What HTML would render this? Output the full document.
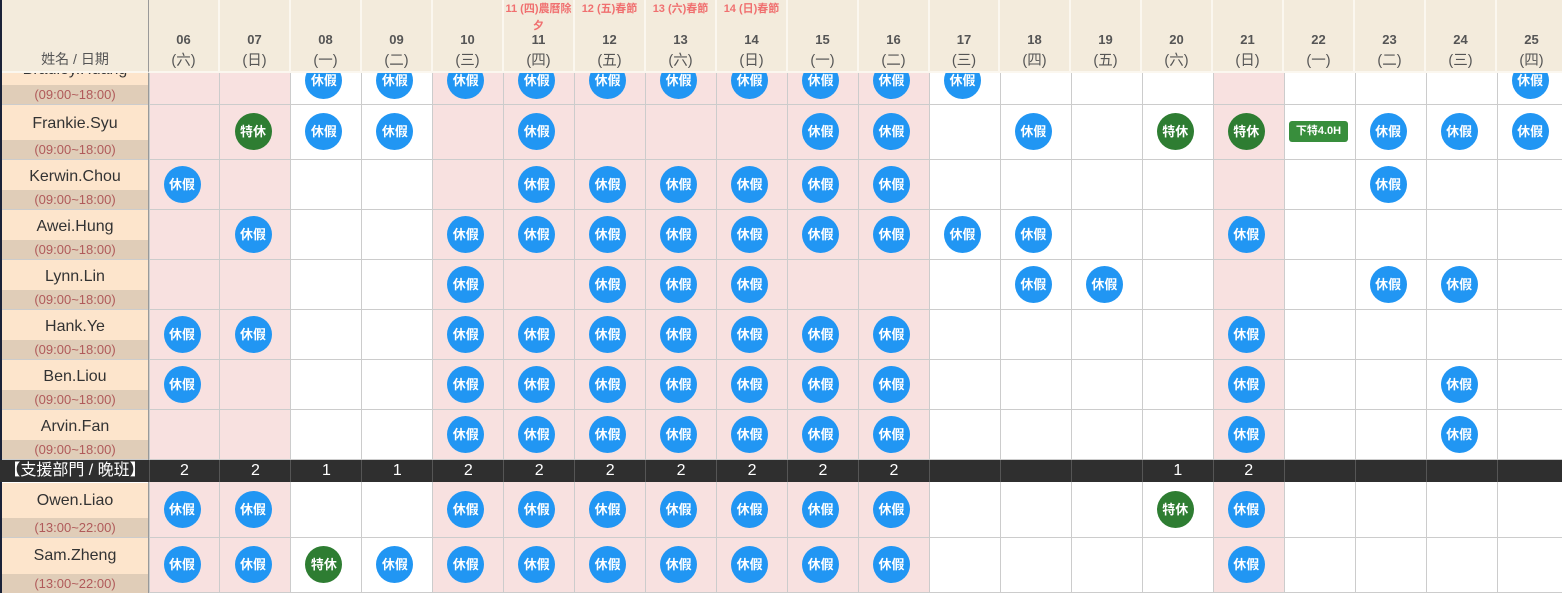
<!DOCTYPE html>
<html><head><meta charset="utf-8"><style>
*{margin:0;padding:0;box-sizing:border-box}
body{width:1562px;height:593px;overflow:hidden;background:#fff;position:relative;font-family:"Liberation Sans","Noto Sans CJK TC",sans-serif}
.a{position:absolute}
.col{position:absolute;top:0;height:593px;width:71px;border-left:1px solid #ccc}
.pk{background:#f8e1e0}
.hl{position:absolute;left:0;width:1562px;height:1px;background:#ccc}
.hdr{position:absolute;top:0;height:73px;background:#f3ebdc;border-right:2px solid #fbf7ef;border-bottom:2px solid #fbf7ef;text-align:center;color:#555}
.hdr .n{position:absolute;left:0;right:0;top:32px;font-weight:bold;font-size:13px}
.hdr .w{position:absolute;left:0;right:0;top:49px;font-size:14.5px}
.hdr .h{position:absolute;left:0;right:0;top:1px;font-size:11px;color:#f07070;font-weight:bold;line-height:17px}
.nm{position:absolute;left:2px;width:146px;background:#fde5cc;text-align:center;color:#333;font-size:16px}
.nm .t{position:absolute;left:0;right:0;bottom:0;height:19px;background:#e0cdb8;color:#b05a5a;font-size:13px;line-height:19px}
.b,.g{position:absolute;width:37px;height:37px;border-radius:50%;color:#fff;font-size:13px;font-weight:bold;text-align:center;line-height:37px;font-style:normal}
.b{background:#2196f3}.g{background:#2e7d32}
.c0{left:163.5px}.c1{left:234.5px}.c2{left:305.4px}.c3{left:376.4px}.c4{left:447.3px}.c5{left:518.3px}.c6{left:589.2px}.c7{left:660.2px}.c8{left:731.1px}.c9{left:802.1px}.c10{left:873px}.c11{left:944px}.c12{left:1014.9px}.c13{left:1085.9px}.c14{left:1156.8px}.c15{left:1227.8px}.c16{left:1298.7px}.c17{left:1369.7px}.c18{left:1440.6px}.c19{left:1511.6px}
.r0{top:62px}.r1{top:112.5px}.r2{top:165.5px}.r3{top:215.5px}.r4{top:265.5px}.r5{top:316px}.r6{top:366px}.r7{top:416px}.r8{top:490.5px}.r9{top:545.5px}
.bar{position:absolute;left:0;top:460px;width:1562px;height:22px;background:#2f2f2f;color:#fff;font-size:16px;line-height:22px}
.bar span{position:absolute;width:71px;text-align:center;top:0;height:22px;border-left:1px solid #555}
</style></head><body>
<div class="col pk" style="left:148.5px"></div><div class="col pk" style="left:219.4px"></div><div class="col" style="left:290.4px"></div><div class="col" style="left:361.3px"></div><div class="col pk" style="left:432.3px"></div><div class="col pk" style="left:503.2px"></div><div class="col pk" style="left:574.2px"></div><div class="col pk" style="left:645.1px"></div><div class="col pk" style="left:716.1px"></div><div class="col pk" style="left:787px"></div><div class="col pk" style="left:858px"></div><div class="col" style="left:928.9px"></div><div class="col" style="left:999.9px"></div><div class="col" style="left:1070.8px"></div><div class="col" style="left:1141.8px"></div><div class="col pk" style="left:1212.7px"></div><div class="col" style="left:1283.7px"></div><div class="col" style="left:1354.6px"></div><div class="col" style="left:1425.6px"></div><div class="col" style="left:1496.5px"></div>
<div class="hl" style="top:104px"></div><div class="hl" style="top:159px"></div><div class="hl" style="top:209px"></div><div class="hl" style="top:259px"></div><div class="hl" style="top:309px"></div><div class="hl" style="top:359px"></div><div class="hl" style="top:409px"></div><div class="hl" style="top:459px"></div><div class="hl" style="top:537px"></div><div class="hl" style="top:592px"></div>
<div class="a" style="left:0;top:0;width:2px;height:593px;background:#1a2238"></div>
<div class="a" style="left:148px;top:0;width:1px;height:593px;background:#999"></div>
<div class="nm" style="top:50px;height:54px"><div style="position:absolute;left:0;right:0;top:11px">Bradley.Huang</div><div class="t">(09:00~18:00)</div></div>
<div class="nm" style="top:105px;height:54px"><div style="padding-top:10px">Frankie.Syu</div><div class="t">(09:00~18:00)</div></div>
<div class="nm" style="top:160px;height:49px"><div style="padding-top:8px">Kerwin.Chou</div><div class="t">(09:00~18:00)</div></div>
<div class="nm" style="top:210px;height:49px"><div style="padding-top:8px">Awei.Hung</div><div class="t">(09:00~18:00)</div></div>
<div class="nm" style="top:260px;height:49px"><div style="padding-top:8px">Lynn.Lin</div><div class="t">(09:00~18:00)</div></div>
<div class="nm" style="top:310px;height:49px"><div style="padding-top:8px">Hank.Ye</div><div class="t">(09:00~18:00)</div></div>
<div class="nm" style="top:360px;height:49px"><div style="padding-top:8px">Ben.Liou</div><div class="t">(09:00~18:00)</div></div>
<div class="nm" style="top:410px;height:49px"><div style="padding-top:8px">Arvin.Fan</div><div class="t">(09:00~18:00)</div></div>
<div class="nm" style="top:483px;height:54px"><div style="padding-top:9px">Owen.Liao</div><div class="t">(13:00~22:00)</div></div>
<div class="nm" style="top:538px;height:55px"><div style="padding-top:9px">Sam.Zheng</div><div class="t">(13:00~22:00)</div></div>

<i class="b c2 r0">休假</i><i class="b c3 r0">休假</i><i class="b c4 r0">休假</i><i class="b c5 r0">休假</i><i class="b c6 r0">休假</i><i class="b c7 r0">休假</i><i class="b c8 r0">休假</i><i class="b c9 r0">休假</i><i class="b c10 r0">休假</i><i class="b c11 r0">休假</i><i class="b c19 r0">休假</i>
<i class="g c1 r1">特休</i><i class="b c2 r1">休假</i><i class="b c3 r1">休假</i><i class="b c5 r1">休假</i><i class="b c9 r1">休假</i><i class="b c10 r1">休假</i><i class="b c12 r1">休假</i><i class="g c14 r1">特休</i><i class="g c15 r1">特休</i><i class="b c17 r1">休假</i><i class="b c18 r1">休假</i><i class="b c19 r1">休假</i>
<div class="a" style="left:1289px;top:121px;width:59px;height:21px;background:#388e3c;border-radius:3px;color:#fff;font-size:11px;font-weight:bold;text-align:center;line-height:21px">下特4.0H</div>
<i class="b c0 r2">休假</i><i class="b c5 r2">休假</i><i class="b c6 r2">休假</i><i class="b c7 r2">休假</i><i class="b c8 r2">休假</i><i class="b c9 r2">休假</i><i class="b c10 r2">休假</i><i class="b c17 r2">休假</i>
<i class="b c1 r3">休假</i><i class="b c4 r3">休假</i><i class="b c5 r3">休假</i><i class="b c6 r3">休假</i><i class="b c7 r3">休假</i><i class="b c8 r3">休假</i><i class="b c9 r3">休假</i><i class="b c10 r3">休假</i><i class="b c11 r3">休假</i><i class="b c12 r3">休假</i><i class="b c15 r3">休假</i>
<i class="b c4 r4">休假</i><i class="b c6 r4">休假</i><i class="b c7 r4">休假</i><i class="b c8 r4">休假</i><i class="b c12 r4">休假</i><i class="b c13 r4">休假</i><i class="b c17 r4">休假</i><i class="b c18 r4">休假</i>
<i class="b c0 r5">休假</i><i class="b c1 r5">休假</i><i class="b c4 r5">休假</i><i class="b c5 r5">休假</i><i class="b c6 r5">休假</i><i class="b c7 r5">休假</i><i class="b c8 r5">休假</i><i class="b c9 r5">休假</i><i class="b c10 r5">休假</i><i class="b c15 r5">休假</i>
<i class="b c0 r6">休假</i><i class="b c4 r6">休假</i><i class="b c5 r6">休假</i><i class="b c6 r6">休假</i><i class="b c7 r6">休假</i><i class="b c8 r6">休假</i><i class="b c9 r6">休假</i><i class="b c10 r6">休假</i><i class="b c15 r6">休假</i><i class="b c18 r6">休假</i>
<i class="b c4 r7">休假</i><i class="b c5 r7">休假</i><i class="b c6 r7">休假</i><i class="b c7 r7">休假</i><i class="b c8 r7">休假</i><i class="b c9 r7">休假</i><i class="b c10 r7">休假</i><i class="b c15 r7">休假</i><i class="b c18 r7">休假</i>
<i class="b c0 r8">休假</i><i class="b c1 r8">休假</i><i class="b c4 r8">休假</i><i class="b c5 r8">休假</i><i class="b c6 r8">休假</i><i class="b c7 r8">休假</i><i class="b c8 r8">休假</i><i class="b c9 r8">休假</i><i class="b c10 r8">休假</i><i class="g c14 r8">特休</i><i class="b c15 r8">休假</i>
<i class="b c0 r9">休假</i><i class="b c1 r9">休假</i><i class="g c2 r9">特休</i><i class="b c3 r9">休假</i><i class="b c4 r9">休假</i><i class="b c5 r9">休假</i><i class="b c6 r9">休假</i><i class="b c7 r9">休假</i><i class="b c8 r9">休假</i><i class="b c9 r9">休假</i><i class="b c10 r9">休假</i><i class="b c15 r9">休假</i>

<div class="bar"><div style="position:absolute;left:2px;width:146px;text-align:center">【支援部門 / 晚班】</div>
<span style="left:148.5px">2</span><span style="left:219.4px">2</span><span style="left:290.4px">1</span><span style="left:361.3px">1</span><span style="left:432.3px">2</span><span style="left:503.2px">2</span><span style="left:574.2px">2</span><span style="left:645.1px">2</span><span style="left:716.1px">2</span><span style="left:787px">2</span><span style="left:858px">2</span><span style="left:928.9px"></span><span style="left:999.9px"></span><span style="left:1070.8px"></span><span style="left:1141.8px">1</span><span style="left:1212.7px">2</span><span style="left:1283.7px"></span><span style="left:1354.6px"></span><span style="left:1425.6px"></span><span style="left:1496.5px"></span></div>

<div class="hdr" style="left:2px;width:147px;border-right:1px solid #999"><div style="position:absolute;left:0;right:0;top:49px;font-size:14px">姓名 / 日期</div></div>
<div class="hdr" style="left:149px;width:71px"><div class="n">06</div><div class="w">(六)</div></div>
<div class="hdr" style="left:220px;width:71px"><div class="n">07</div><div class="w">(日)</div></div>
<div class="hdr" style="left:291px;width:71px"><div class="n">08</div><div class="w">(一)</div></div>
<div class="hdr" style="left:362px;width:71px"><div class="n">09</div><div class="w">(二)</div></div>
<div class="hdr" style="left:433px;width:71px"><div class="n">10</div><div class="w">(三)</div></div>
<div class="hdr" style="left:504px;width:71px"><div class="h">11 (四)農曆除<br>夕</div><div class="n">11</div><div class="w">(四)</div></div>
<div class="hdr" style="left:575px;width:71px"><div class="h">12 (五)春節</div><div class="n">12</div><div class="w">(五)</div></div>
<div class="hdr" style="left:646px;width:71px"><div class="h">13 (六)春節</div><div class="n">13</div><div class="w">(六)</div></div>
<div class="hdr" style="left:717px;width:71px"><div class="h">14 (日)春節</div><div class="n">14</div><div class="w">(日)</div></div>
<div class="hdr" style="left:788px;width:71px"><div class="n">15</div><div class="w">(一)</div></div>
<div class="hdr" style="left:859px;width:71px"><div class="n">16</div><div class="w">(二)</div></div>
<div class="hdr" style="left:930px;width:70px"><div class="n">17</div><div class="w">(三)</div></div>
<div class="hdr" style="left:1000px;width:71px"><div class="n">18</div><div class="w">(四)</div></div>
<div class="hdr" style="left:1071px;width:71px"><div class="n">19</div><div class="w">(五)</div></div>
<div class="hdr" style="left:1142px;width:71px"><div class="n">20</div><div class="w">(六)</div></div>
<div class="hdr" style="left:1213px;width:71px"><div class="n">21</div><div class="w">(日)</div></div>
<div class="hdr" style="left:1284px;width:71px"><div class="n">22</div><div class="w">(一)</div></div>
<div class="hdr" style="left:1355px;width:71px"><div class="n">23</div><div class="w">(二)</div></div>
<div class="hdr" style="left:1426px;width:71px"><div class="n">24</div><div class="w">(三)</div></div>
<div class="hdr" style="left:1497px;width:71px"><div class="n">25</div><div class="w">(四)</div></div>
</body></html>
